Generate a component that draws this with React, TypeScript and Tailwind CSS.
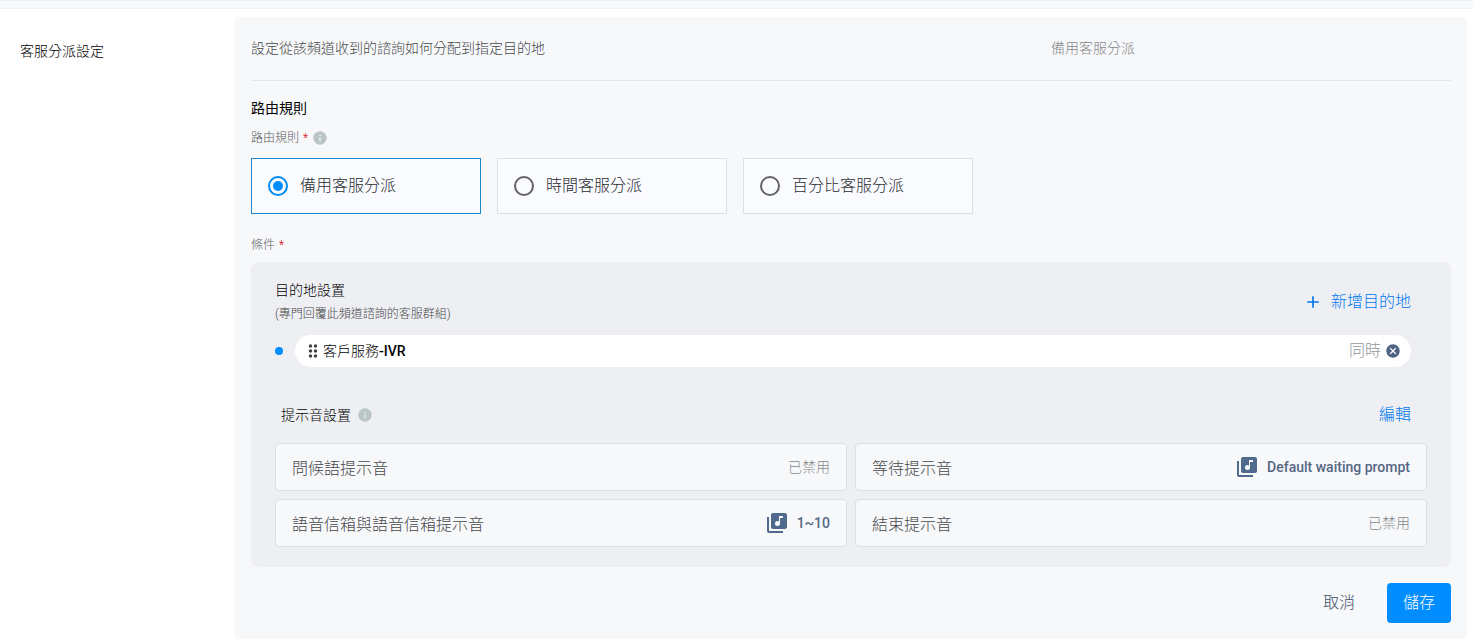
import { useState } from "react";
import {
  MdAdd,
  MdCancel,
  MdDragIndicator,
  MdInfo,
  MdLibraryMusic,
} from "react-icons/md";

type Prompt = {
  id: string;
  name: string;
  value: string | null;
};

const rules = [
  { id: "fallback", label: "備用客服分派" },
  { id: "time", label: "時間客服分派" },
  { id: "percent", label: "百分比客服分派" },
];

const prompts: Prompt[] = [
  { id: "greeting", name: "問候語提示音", value: null },
  { id: "waiting", name: "等待提示音", value: "Default waiting prompt" },
  { id: "voicemail", name: "語音信箱與語音信箱提示音", value: "1~10" },
  { id: "ending", name: "結束提示音", value: null },
];

export default function App() {
  const [rule, setRule] = useState("fallback");
  const [destinations, setDestinations] = useState(["客戶服務-IVR"]);

  return (
    <div className="min-h-screen bg-white font-['Roboto','Noto_Sans_CJK_TC',sans-serif] font-light text-black">
      <div className="h-[9px] border-t border-b border-[#f0f1f5] bg-[#f9faff]" />

      <div className="flex pt-2 pr-1.5">
        <aside className="w-[235px] shrink-0 px-5 pt-6">
          <h1 className="text-sm leading-5 font-light">客服分派設定</h1>
        </aside>

        <main className="min-w-0 flex-1 rounded bg-[#f7f8fa] px-4 pb-4">
          <div className="grid grid-cols-3 border-b border-[#e6e7ea] pt-[21px] pb-[22px] text-sm leading-5">
            <p className="col-span-2 text-[#47484b]">
              設定從該頻道收到的諮詢如何分配到指定目的地
            </p>
            <p className="text-[#87888b]">備用客服分派</p>
          </div>

          <form onSubmit={(e) => e.preventDefault()}>
            <h2 className="pt-[17px] text-sm leading-5 font-normal">
              路由規則
            </h2>

            <fieldset>
              <legend className="flex items-center pt-3 pb-3 text-xs leading-4 text-[#5c5e61]">
                路由規則
                <Required />
                <MdInfo className="ml-1 size-4 text-[#b9c5c7]" />
              </legend>

              <div className="flex gap-4">
                {rules.map((item) => (
                  <label
                    key={item.id}
                    className="flex h-14 w-[230px] items-center gap-3 border border-[#dfe0e3] bg-[#fafbff] px-4 text-base text-[#2c2d30] has-checked:border-[#1a85cc]"
                  >
                    <input
                      type="radio"
                      name="rule"
                      value={item.id}
                      checked={rule === item.id}
                      onChange={() => setRule(item.id)}
                      className="grid size-5 appearance-none place-content-center rounded-full border-2 border-[#626367] before:size-2.5 before:rounded-full checked:border-[#008bf5] checked:before:bg-[#008dff]"
                    />
                    {item.label}
                  </label>
                ))}
              </div>
            </fieldset>

            <p className="pt-[23px] pb-[9px] text-xs leading-4 text-[#5c5e61]">
              條件
              <Required />
            </p>

            <section className="rounded-lg bg-[#eeeff3] px-6 pt-4 pb-5">
              <div className="flex items-center justify-between pr-4">
                <div>
                  <h3 className="text-sm leading-6 font-light">目的地設置</h3>
                  <p className="text-xs leading-6 text-[#47484b]">
                    (專門回覆此頻道諮詢的客服群組)
                  </p>
                </div>
                <button
                  type="button"
                  className="flex items-center gap-2 text-base text-[#0077ee]"
                >
                  <MdAdd className="size-5" />
                  新增目的地
                </button>
              </div>

              <ul className="space-y-2 pt-[9px] pr-4">
                {destinations.map((name) => (
                  <li key={name} className="flex items-center gap-3">
                    <span className="size-2 shrink-0 rounded-full bg-[#008dff]" />
                    <div className="flex h-8 flex-1 items-center rounded-full bg-white pr-2.5 pl-2">
                      <MdDragIndicator className="size-5 text-[#3f4044]" />
                      <Destination name={name} />
                      <span className="mr-1 ml-auto text-base text-[#94969b]">
                        同時
                      </span>
                      <button
                        type="button"
                        aria-label="移除"
                        onClick={() =>
                          setDestinations(destinations.filter((d) => d !== name))
                        }
                      >
                        <MdCancel className="size-4 text-[#4f6485]" />
                      </button>
                    </div>
                  </li>
                ))}
              </ul>

              <div className="flex items-center justify-between pt-9 pr-4 pb-4 pl-1.5">
                <h3 className="flex items-center gap-1.5 text-sm font-light">
                  提示音設置
                  <MdInfo className="size-4 text-[#b9c5c7]" />
                </h3>
                <button type="button" className="text-base text-[#0077ee]">
                  編輯
                </button>
              </div>

              <div className="grid grid-cols-2 gap-2">
                {prompts.map((prompt) => (
                  <PromptCard key={prompt.id} prompt={prompt} />
                ))}
              </div>
            </section>

            <div className="flex justify-end gap-4 pt-4">
              <button
                type="button"
                className="h-10 rounded px-4 text-base text-[#3f4d69]"
              >
                取消
              </button>
              <button
                type="submit"
                className="h-10 rounded bg-[#008dff] px-4 text-base text-white"
              >
                儲存
              </button>
            </div>
          </form>
        </main>
      </div>
    </div>
  );
}

function Required() {
  return <span className="ml-1 font-light text-[#d8000c]">*</span>;
}

// Chinese part of the name stays light, the Latin suffix is medium
function Destination({ name }: { name: string }) {
  const [title, suffix] = name.split("-");

  return (
    <span className="text-sm">
      {title}
      {suffix && <span className="font-medium">-{suffix}</span>}
    </span>
  );
}

function PromptCard({ prompt }: { prompt: Prompt }) {
  return (
    <div className="flex h-12 items-center justify-between rounded border border-[#dddfe3] bg-[#f7f8fa] px-4">
      <span className="pt-1 text-base text-[#47484b]">{prompt.name}</span>
      {prompt.value ? (
        <span className="flex items-center gap-2 text-sm font-medium text-[#566784]">
          <MdLibraryMusic className="size-6 text-[#4f6a8c]" />
          {prompt.value}
        </span>
      ) : (
        <span className="text-sm text-[#87888b]">已禁用</span>
      )}
    </div>
  );
}
